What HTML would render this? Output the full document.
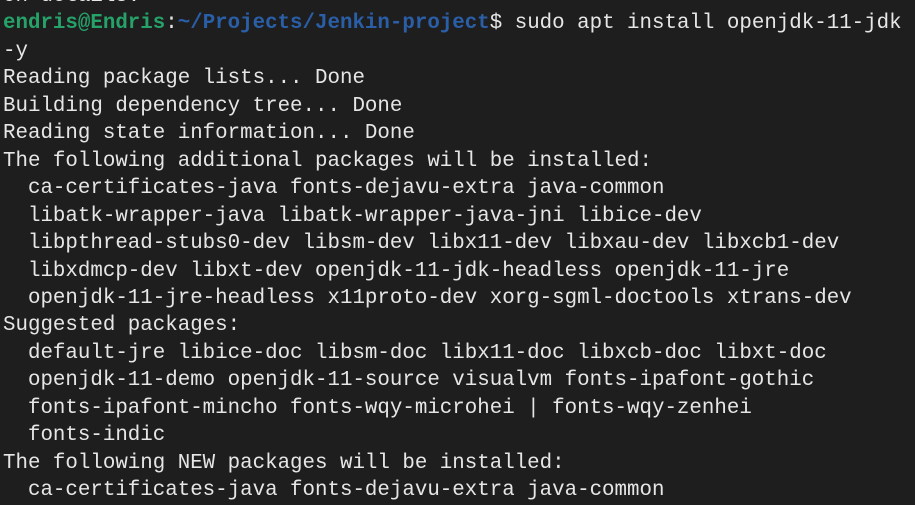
<!DOCTYPE html>
<html><head><style>
html,body{margin:0;padding:0;background:#1e1e1e;width:915px;height:483px;overflow:hidden}
pre{position:absolute;left:3px;top:-17px;margin:0;font-family:"Liberation Mono","DejaVu Sans Mono",monospace;font-size:20.8px;line-height:27.45px;color:#e6e6e6;white-space:pre}
.g{color:#26a269;font-weight:bold}.b{color:#2a5fa8;font-weight:bold}
</style></head><body><pre>on details.
<span class="g">endris@Endris</span>:<span class="b">~/Projects/Jenkin-project</span>$ sudo apt install openjdk-11-jdk
-y
Reading package lists... Done
Building dependency tree... Done
Reading state information... Done
The following additional packages will be installed:
  ca-certificates-java fonts-dejavu-extra java-common
  libatk-wrapper-java libatk-wrapper-java-jni libice-dev
  libpthread-stubs0-dev libsm-dev libx11-dev libxau-dev libxcb1-dev
  libxdmcp-dev libxt-dev openjdk-11-jdk-headless openjdk-11-jre
  openjdk-11-jre-headless x11proto-dev xorg-sgml-doctools xtrans-dev
Suggested packages:
  default-jre libice-doc libsm-doc libx11-doc libxcb-doc libxt-doc
  openjdk-11-demo openjdk-11-source visualvm fonts-ipafont-gothic
  fonts-ipafont-mincho fonts-wqy-microhei | fonts-wqy-zenhei
  fonts-indic
The following NEW packages will be installed:
  ca-certificates-java fonts-dejavu-extra java-common
</pre></body></html>
